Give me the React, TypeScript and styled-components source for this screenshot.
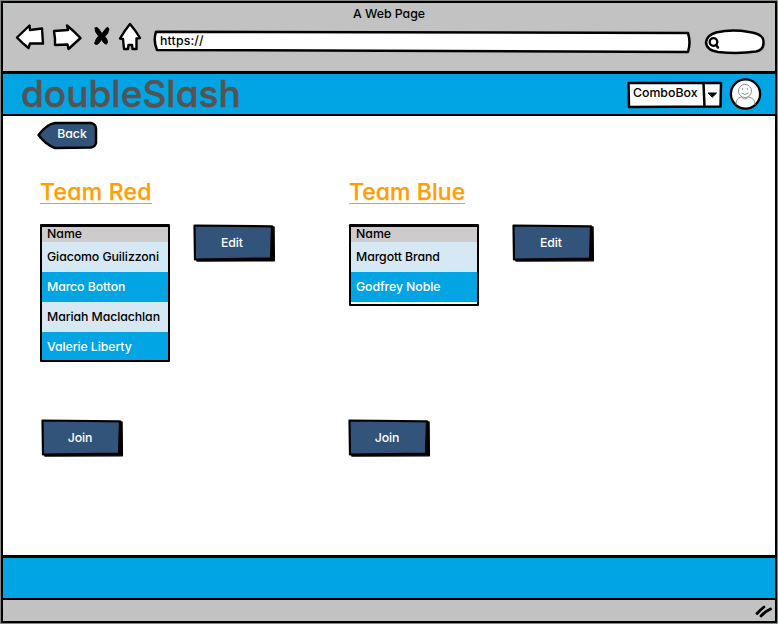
import React from "react";
import styled, { createGlobalStyle } from "styled-components";

const BLUE = "#02a5e4";
const NAVY = "#32547a";
const GREY = "#c2c2c2";

const GlobalStyle = createGlobalStyle`
  *, *::before { box-sizing: border-box; }
  body { margin: 0; background: #fff; }
  button { font: inherit; cursor: pointer; }
`;

const Browser = styled.div`
  width: 778px;
  height: 624px;
  padding: 1px;
  background: #858985;
  overflow: hidden;
  font-family: Inter, "Open Sans", sans-serif;
  font-feature-settings: "cv11" 1, "ss03" 1;
  font-size: 12.3px;
  font-weight: 500;
  line-height: 16px;
  color: #000;
`;

const Frame = styled.div`
  height: 622px;
  display: flex;
  flex-direction: column;
  border: 2px solid #000;
  background: #fff;
`;

const Chrome = styled.header`
  height: 68px;
  background: ${GREY};
  padding-top: 3px;
`;

const Text = styled.span<{ $gap?: number }>`
  display: inline-block;
  white-space: nowrap;
  letter-spacing: ${(p) => p.$gap ?? 0}px;
`;

const WindowTitle = styled.div`
  text-align: center;
  height: 16px;
`;

const Toolbar = styled.div`
  display: flex;
  align-items: flex-start;
`;

const NavIcons = styled.svg`
  width: 130px;
  height: 32px;
  margin-left: 12px;
  fill: #fff;
  stroke: #000;
  stroke-width: 2.4;
  stroke-linejoin: round;
  stroke-linecap: round;
`;

const Sketch = styled.svg`
  position: absolute;
  inset: 0;
  width: 100%;
  height: 100%;
  overflow: visible;
  stroke: #000;
  stroke-width: 2.5;
  stroke-linejoin: round;
  stroke-linecap: round;
`;

const Address = styled.div`
  position: relative;
  width: 539px;
  height: 24px;
  margin: 7px 0 0 8px;
  padding: 4px 7px;
`;

const Search = styled.div`
  position: relative;
  width: 61px;
  height: 26px;
  margin: 6px 0 0 12px;
`;

const Label = styled.span`
  position: relative;
`;

const BrandBar = styled.div`
  height: 45px;
  display: flex;
  align-items: center;
  background: ${BLUE};
  border: solid #000;
  border-width: 3px 0 2px;
  padding: 0 12px 0 18px;
`;

const Brand = styled.h1`
  margin: 0;
  flex: 1;
  font-size: 37px;
  line-height: 40px;
  font-weight: 500;
  color: #545454;
  -webkit-text-stroke: 0.5px #545454;
`;

const Combo = styled.div`
  position: relative;
  width: 95px;
  height: 27px;
  padding: 4px 6px;
  margin: 1px 7px 0 0;
`;

const Avatar = styled.svg`
  width: 34px;
  height: 34px;
`;

const Content = styled.main`
  flex: 1;
  padding: 5px 0 0 34px;
`;

const Back = styled.button`
  position: relative;
  display: block;
  width: 61px;
  height: 28px;
  border: 0;
  padding: 0 0 2px 9px;
  background: none;
  color: #fff;
`;

const Teams = styled.div`
  display: grid;
  grid-template-columns: 309px 309px;
  margin: 28px 0 0 3px;
`;

const Team = styled.section`
  display: flex;
  flex-direction: column;
  align-items: flex-start;
`;

const TeamTitle = styled.h2`
  margin: 0;
  height: 27px;
  line-height: 31px;
  font-size: 23px;
  font-weight: 500;
  color: #ff9f00;
  -webkit-text-stroke: 0.25px #ff9f00;
  border-bottom: 1px solid #ff9f00;
`;

const Roster = styled.div<{ $gap: number }>`
  display: flex;
  align-items: flex-start;
  gap: ${(p) => p.$gap}px;
  height: 195px;
  margin-top: 20px;
`;

const Table = styled.div<{ $tall: boolean }>`
  width: 130px;
  height: ${(p) => (p.$tall ? 138 : 82)}px;
  overflow: hidden;
  border: 2px solid #000;
  border-width: 3px 2.5px 2px;
  border-radius: 1px;
  background: #fff;
`;

const HeadRow = styled.div`
  height: 15px;
  line-height: 13px;
  padding-left: 5px;
  background: #cdcbcc;
`;

const Row = styled.div<{ $active: boolean }>`
  height: 30px;
  line-height: 29px;
  padding-left: 5px;
  background: ${(p) => (p.$active ? BLUE : "#d6e8f4")};
  color: ${(p) => (p.$active ? "#fff" : "#000")};
`;

const ActionButton = styled.button`
  position: relative;
  width: 82px;
  height: 38px;
  padding: 0 4px 1px 0;
  border: 0;
  background: none;
  color: #fff;
`;

const JoinSlot = styled.div<{ $inset: number }>`
  margin-left: ${(p) => p.$inset}px;
`;

const BottomBar = styled.div`
  height: 45px;
  background: ${BLUE};
  border: solid #000;
  border-width: 3px 0 2px;
`;

const StatusBar = styled.footer`
  height: 21px;
  display: flex;
  justify-content: flex-end;
  background: ${GREY};
`;

const Grip = styled.svg`
  width: 24px;
  height: 21px;
  stroke: #000;
  stroke-width: 2.8;
  stroke-linecap: round;
`;

function SketchButton({ label }: { label: string }) {
  return (
    <ActionButton>
      <Sketch viewBox="0 0 82 38">
        <path d="M3 4 L81 3 L81.3 36.8 L4 37Z" fill="#000" strokeWidth="1.5" />
        <path d="M1.5 1.5 L79 2.3 L78 34.5 L2 35.5Z" fill={NAVY} strokeWidth="2.2" />
      </Sketch>
      <Label>
        <Text $gap={-0.1}>{label}</Text>
      </Label>
    </ActionButton>
  );
}

type TeamData = {
  title: string;
  titleGap: number;
  buttonGap: number;
  joinInset: number;
  members: string[];
};

const teams: TeamData[] = [
  {
    title: "Team Red",
    titleGap: 0.25,
    buttonGap: 23,
    joinInset: 1,
    members: ["Giacomo Guilizzoni", "Marco Botton", "Mariah Maclachlan", "Valerie Liberty"],
  },
  {
    title: "Team Blue",
    titleGap: 0.05,
    buttonGap: 33,
    joinInset: -1,
    members: ["Margott Brand", "Godfrey Noble"],
  },
];

export default function App() {
  return (
    <Browser>
      <GlobalStyle />
      <Frame>
        <Chrome>
          <WindowTitle>
            <Text>A Web Page</Text>
          </WindowTitle>
          <Toolbar>
            <NavIcons viewBox="15 22 130 32">
              <path d="M17 37.5 L29.5 25.5 L30 30 L42 28.5 L43 43.5 L30 43.5 L28.5 48 Q22 43 17 37.5Z" />
              <path d="M54 31 L68 30 L67 25.5 Q74 31 80.5 38 L68.5 49 L67.5 44.5 L55 45 L55 39Z" />
              <path
                d="M95 28 Q97 26 99.5 30 L102 33.5 L105.5 29 Q108 25.5 109 29.5 Q108.5 33.5 105 36.5 Q108 40 107.5 43 Q105.5 46.5 101.5 39.5 Q97 47 94.5 43.5 Q95.500 39 98.500 36 Q94.500 32 95 28Z"
                fill="#000"
                strokeWidth="0.8"
              />
              <path d="M130 24 Q136 31 140 38 L136.500 38.500 L136.500 49 L132.500 49 L132 45 L128.500 45 L128 49 L124 49 L123 39 L120 38.500 Q125 30 130 24Z" />
            </NavIcons>
            <Address>
              <Sketch viewBox="0 0 539 24" fill="#fff">
                <path d="M3 2.700 L535 4 Q538 13 535 23 L4 21 Q0 12 3 2.700Z" />
              </Sketch>
              <Label>
                <Text $gap={0.15}>https://</Text>
              </Label>
            </Address>
            <Search>
              <Sketch viewBox="0 0 61 26" fill="#fff">
                <path d="M12 4.500 Q28 1 45 4 Q60 6 59.500 14 Q60 22 52 23.500 Q35 26 14 24 Q2 22 2 14 Q3 7 12 4.500Z" />
                <circle cx="9.500" cy="14" r="3.800" strokeWidth="2.300" />
                <path d="M12 17 L14 19.500" />
              </Sketch>
            </Search>
          </Toolbar>
        </Chrome>
        <BrandBar>
          <Brand>
            <Text>doubleSlash</Text>
          </Brand>
          <Combo>
            <Sketch viewBox="0 0 95 27" fill="#fff">
              <path d="M1.500 2 L94 2 L93.500 25.500 L2 26Z M76.500 2 L77.500 25.500" />
              <path d="M81.500 12 L89.500 12 L85.500 16Z" fill="#000" strokeWidth="1" />
            </Sketch>
            <Label>
              <Text>ComboBox</Text>
            </Label>
          </Combo>
          <Avatar viewBox="0 0 34 34" fill="none" stroke="#777" strokeWidth="0.8">
            <circle cx="16.500" cy="17" r="14.600" fill="#fff" stroke="#000" strokeWidth="2.300" />
            <circle cx="16" cy="14" r="6.500" />
            <path d="M12.500 16 Q16 19 19.500 16 M7 28 Q6.500 21 12.500 20 Q16 24 19.500 20 Q26 21 26 28" />
            <circle cx="13.700" cy="12" r=".4" />
            <circle cx="18.500" cy="12" r=".4" />
          </Avatar>
        </BrandBar>
        <Content>
          <Back>
            <Sketch viewBox="0 0 61 28">
              <path
                d="M1.500 14 Q10 3 18 2 L54 2 Q59 3 59 8 L59 22 Q58 26 54 26.500 L18 27 Q9 24 1.500 14Z"
                fill={NAVY}
              />
            </Sketch>
            <Label>
              <Text>Back</Text>
            </Label>
          </Back>
          <Teams>
            {teams.map((team) => (
              <Team key={team.title}>
                <TeamTitle>
                  <Text $gap={team.titleGap}>{team.title}</Text>
                </TeamTitle>
                <Roster $gap={team.buttonGap}>
                  <Table $tall={team.members.length > 2}>
                    <HeadRow>
                      <Text>Name</Text>
                    </HeadRow>
                    {team.members.map((name, i) => (
                      <Row key={name} $active={i % 2 === 1}>
                        <Text $gap={-0.08}>{name}</Text>
                      </Row>
                    ))}
                  </Table>
                  <SketchButton label="Edit" />
                </Roster>
                <JoinSlot $inset={team.joinInset}>
                  <SketchButton label="Join" />
                </JoinSlot>
              </Team>
            ))}
          </Teams>
        </Content>
        <BottomBar />
        <StatusBar>
          <Grip viewBox="0 0 24 21">
            <path d="M6 13.500 Q9 10 13 7 M10 16 Q14 11.500 19.500 9" fill="none" />
          </Grip>
        </StatusBar>
      </Frame>
    </Browser>
  );
}
